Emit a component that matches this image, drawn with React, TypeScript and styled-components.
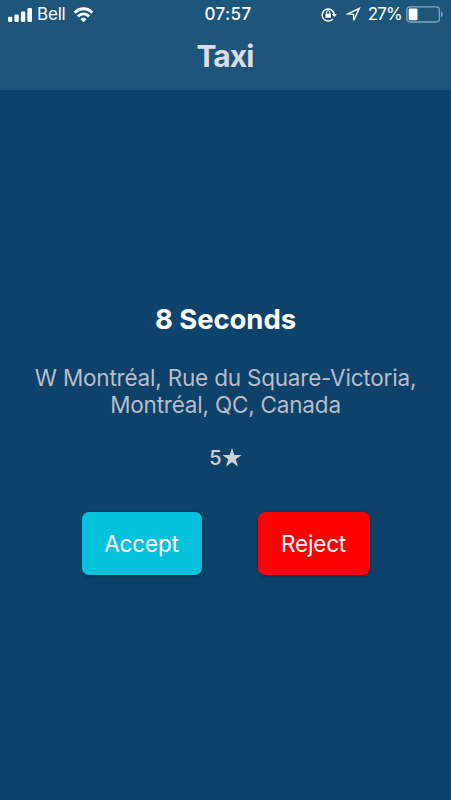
import React from "react";
import styled, { createGlobalStyle } from "styled-components";

const GlobalStyle = createGlobalStyle`
  * { box-sizing: border-box; }
  body { margin: 0; background: #0d426a; }
`;

const Screen = styled.div`
  display: flex;
  flex-direction: column;
  height: 800px;
  overflow: hidden;
  background: #0d426a;
  color: #fff;
  font-family: Inter, "Liberation Sans", sans-serif;
`;

const Header = styled.header`
  height: 90px;
  flex: none;
  background: #1e567b;
`;

const StatusBar = styled.div`
  display: grid;
  grid-template-columns: 1fr auto 1fr;
  align-items: center;
  height: 29px;
  padding: 0 3px 0 8px;
`;

const StatusGroup = styled.div<{ $end?: boolean }>`
  display: flex;
  align-items: center;
  justify-content: ${(p) => (p.$end ? "flex-end" : "flex-start")};
  padding-right: ${(p) => (p.$end ? 4 : 0)}px;
`;

const StatusText = styled.span<{ $weight?: number; $spacing?: number; $left?: number }>`
  margin-left: ${(p) => p.$left ?? 0}px;
  font-size: 17px;
  font-weight: ${(p) => p.$weight ?? 400};
  letter-spacing: ${(p) => p.$spacing ?? 0}px;
  line-height: 29px;
  white-space: nowrap;
`;

const Icon = styled.svg<{ $left?: number }>`
  display: block;
  flex: none;
  margin-left: ${(p) => p.$left ?? 0}px;
`;

const Title = styled.h1`
  margin: 9px 0 0;
  font-size: 30px;
  line-height: 36px;
  font-weight: 700;
  letter-spacing: -0.9px;
  text-indent: -1px;
  text-align: center;
  color: #dcdde6;
`;

const Request = styled.main`
  display: flex;
  flex-direction: column;
  align-items: center;
  padding-top: 211px;
`;

const Countdown = styled.h2`
  margin: 0;
  font-size: 27.5px;
  line-height: 36px;
  font-weight: 700;
  letter-spacing: -0.08px;
`;

const Address = styled.p`
  margin: 27px 0 0;
  font-size: 22.5px;
  line-height: 27px;
  letter-spacing: -0.2px;
  text-align: center;
  color: #b9bdc9;
`;

const Rating = styled.div`
  display: flex;
  align-items: center;
  height: 26px;
  margin-top: 27px;
  font-size: 20px;
  font-weight: 500;
  color: #d0d0d7;
`;

const Actions = styled.div`
  display: flex;
  gap: 56px;
  margin-top: 41px;
`;

const ActionButton = styled.button<{ $tone: string; $width: number }>`
  width: ${(p) => p.$width}px;
  height: 63px;
  padding: 0;
  border: 0;
  border-radius: 7px;
  background: ${(p) => p.$tone};
  box-shadow: 0 1px 3px rgba(0, 0, 0, 0.4);
  color: #fff;
  font: 400 22.5px/64px Inter, "Liberation Sans", sans-serif;
  letter-spacing: -0.15px;
`;

const SignalIcon = () => (
  <Icon width="25" height="14" viewBox="0 0 25 14" fill="#fff">
    <rect x="0" y="8.7" width="4.3" height="5.3" rx="1.2" />
    <rect x="6.4" y="6.5" width="4.4" height="7.5" rx="1.2" />
    <rect x="12.9" y="3.5" width="4.4" height="10.5" rx="1.2" />
    <rect x="19.4" y="0" width="4.6" height="14" rx="1.2" />
  </Icon>
);

const WifiIcon = () => (
  <Icon $left={8} width="21" height="16" viewBox="0 0 22 16" preserveAspectRatio="none" fill="none" stroke="#fff" strokeWidth="2.9">
    <path d="M1.7 5.8C7 .4 15 .4 20.3 5.8" />
    <path d="M5.2 9.4c3.3-3.3 8.3-3.3 11.6 0" />
    <path d="M11 15.2 7.8 12c1.7-1.7 4.7-1.7 6.4 0z" fill="#fff" stroke="none" />
  </Icon>
);

const RotationLockIcon = () => (
  <Icon width="17" height="15" viewBox="0 0 17 15" fill="none" stroke="#fff" strokeWidth="1.5">
    <path d="M11.8 11.9A6 6 0 1 1 13.1 7" />
    <path d="M10.6 6.9h5.3l-2.6 3.2z" fill="#fff" stroke="none" />
    <rect x="4.5" y="6.7" width="5.4" height="4.1" rx=".5" fill="#fff" stroke="none" />
    <path d="M5.6 7V5.3a1.6 1.6 0 0 1 3.2 0V7" strokeWidth="1.1" />
  </Icon>
);

const LocationIcon = () => (
  <Icon $left={8} width="15" height="15" viewBox="0 0 15 15" fill="none" stroke="#fff" strokeWidth="1.4">
    <path d="M13.2 1.5 1.8 6.9l5.6.4.4 5.8z" strokeLinejoin="miter" />
  </Icon>
);

const BatteryIcon = () => (
  <Icon $left={4} width="38" height="17" viewBox="0 0 38 17" fill="none">
    <rect x=".8" y=".8" width="32.6" height="15.2" rx="3.2" stroke="#86a6be" strokeWidth="1.3" />
    <rect x="2.7" y="2.6" width="8.8" height="11.6" rx="1.3" fill="#fff" />
    <path d="M35 5.6c2.4 1 2.4 4.8 0 5.8z" fill="#86a6be" />
  </Icon>
);

const StarIcon = () => (
  <Icon width="20" height="21" viewBox="0 0 20 21" fill="#d0d0d7">
    <path d="M10 0l2.3 7H19.7l-6 4.3 2.3 7.1-6-4.4-6 4.4 2.3-7.1-6-4.3h7.4z" />
  </Icon>
);

export default function App() {
  return (
    <Screen>
      <GlobalStyle />
      <Header>
        <StatusBar>
          <StatusGroup>
            <SignalIcon />
            <StatusText $left={4} $spacing={-0.2}>Bell</StatusText>
            <WifiIcon />
          </StatusGroup>
          <StatusText $weight={500} $spacing={0.4}>07:57</StatusText>
          <StatusGroup $end>
            <RotationLockIcon />
            <LocationIcon />
            <StatusText $left={7} $spacing={-0.8}>27%</StatusText>
            <BatteryIcon />
          </StatusGroup>
        </StatusBar>
        <Title>Taxi</Title>
      </Header>
      <Request>
        <Countdown>8 Seconds</Countdown>
        <Address>
          W Montréal, Rue du Square-Victoria,
          <br />
          Montréal, QC, Canada
        </Address>
        <Rating>
          5<StarIcon />
        </Rating>
        <Actions>
          <ActionButton $tone="#04c2dc" $width={120}>Accept</ActionButton>
          <ActionButton $tone="#ff0000" $width={112}>Reject</ActionButton>
        </Actions>
      </Request>
    </Screen>
  );
}
